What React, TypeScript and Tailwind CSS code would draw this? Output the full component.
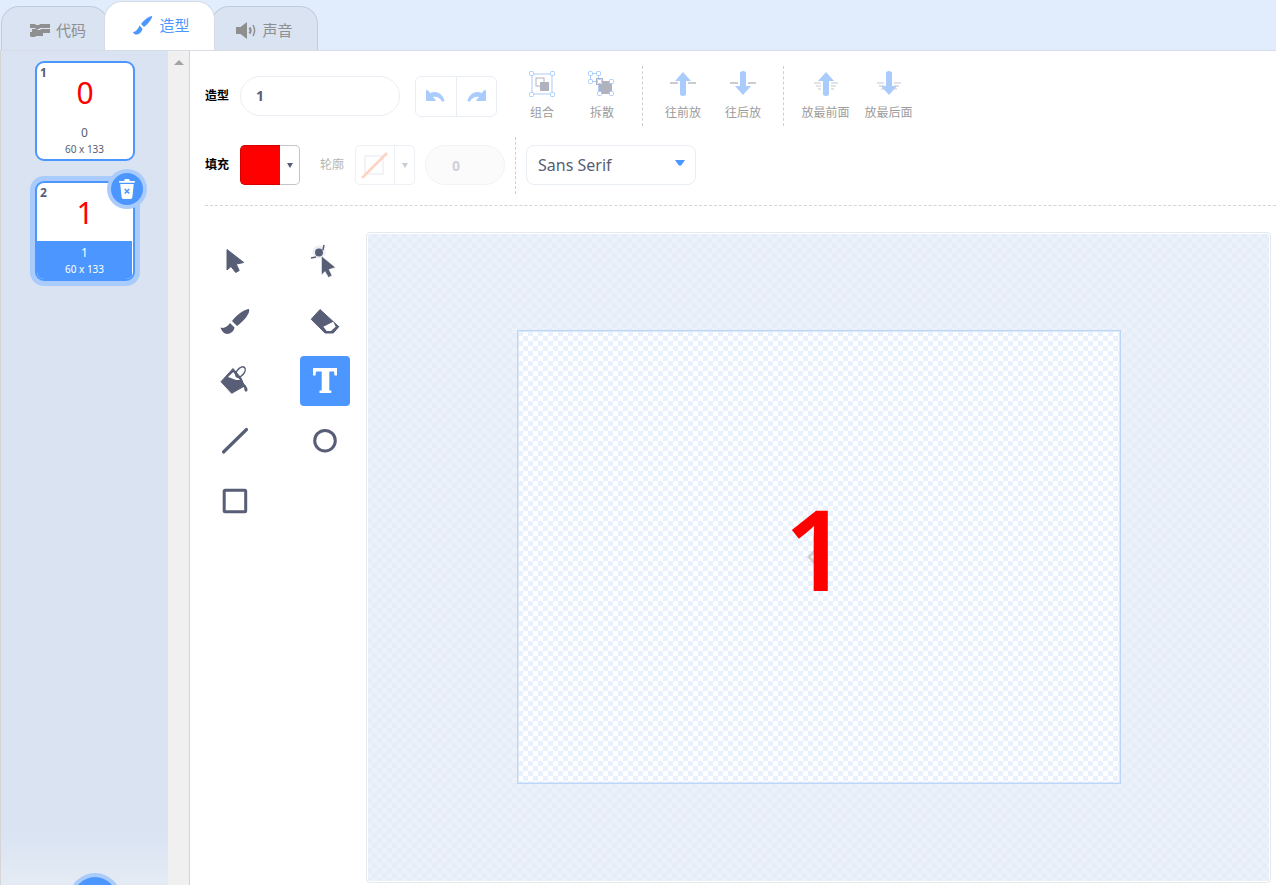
import type { ReactNode } from "react";

const fontStack = "font-['Noto_Sans','Noto_Sans_CJK_SC',sans-serif]";
const checker = "bg-[conic-gradient(#ffffff_25%,#e9f2fc_0_50%,#ffffff_0_75%,#e9f2fc_0)] bg-[length:10px_10px]";
const stageChecker = "bg-[conic-gradient(#e5edf8_25%,#ecf1fa_0_50%,#e5edf8_0_75%,#ecf1fa_0)] bg-[length:10px_10px]";

function Tab({ label, active, icon, className = "" }: { label: string; active?: boolean; icon: ReactNode; className?: string }) {
    if (active) {
        return (
            <div className="relative z-10 -mx-[4px] flex h-[49px] w-[111px] items-center justify-center gap-[6px] rounded-t-[18px] border border-b-0 border-[#d5dbe6] bg-white pb-[1px] pl-[4px] text-[15px] text-[#4c97ff]">
                {icon}
                <span>{label}</span>
            </div>
        );
    }
    return (
        <div className={`flex h-[44px] w-[107px] items-center justify-center gap-[6px] rounded-t-[18px] border border-b-0 border-[#c3cbd9] bg-[#d9e3f2] pt-[3px] text-[15px] text-[#8f8f8f] ${className}`}>
            {icon}
            <span>{label}</span>
        </div>
    );
}

function CodeIcon() {
    return (
        <svg width="20" height="14" viewBox="0 0 20 14" fill="#8f8f8f">
            <path d="M0 1h5l1 1h3l1-1h10v4H10l-1 1H6L5 5H0z" />
            <path d="M2 6h5l1 1h2l1-1h9v-0 4h-7v3H6l-1 1H1l-1-1V9h2z" />
        </svg>
    );
}

function BrushIcon({ color = "#4c97ff" }: { color?: string }) {
    return (
        <svg width="20" height="20" viewBox="0 0 20 20" fill={color}>
            <path d="M19 0c.6 2-3 7-8 11L8 8c3-4 8-8 11-8z" />
            <path d="M6.500 9.500l3 3C9 16 6 19 2.500 18.500 1 18 .3 17 0 16c3 0 5-3 6.500-6.500z" />
        </svg>
    );
}

function SoundIcon() {
    return (
        <svg width="20" height="17" viewBox="0 0 20 17" fill="none">
            <path d="M0 5h4.500L11 0v17l-6.500-5H0z" fill="#8f8f8f" />
            <path d="M13.500 5.500c1.300 1.800 1.300 4.200 0 6" stroke="#8f8f8f" strokeWidth="2.200" />
            <path d="M17 3c2 3.500 2 7.500 0 11" stroke="#8f8f8f" strokeWidth="1.500" />
        </svg>
    );
}

function TrashIcon() {
    return (
        <svg width="18" height="20" viewBox="0 0 20 22" fill="#ffffff">
            <path d="M7 1.500C7 .7 7.700 0 8.500 0h3c.8 0 1.500.7 1.500 1.500V2h5c.6 0 1 .4 1 1s-.4 1-1 1H2c-.6 0-1-.4-1-1s.4-1 1-1h5z" />
            <path d="M2.500 5.500h15L16 20c0 1-1 2-2 2H6c-1 0-2-1-2-2z" />
            <path d="M7.500 11l5 5M12.500 11l-5 5" stroke="#4c97ff" strokeWidth="1.800" />
        </svg>
    );
}

function CostumeCard({ index, value, selected }: { index: string; value: string; selected?: boolean }) {
    return (
        <div className={`relative mx-auto h-[100px] w-[100px] rounded-[9px] border-2 border-[#4c97ff] bg-white ${selected ? "shadow-[0_0_0_5px_#a9ccfc]" : ""}`}>
            <div className="flex h-full flex-col overflow-hidden rounded-[7px]">
                <div className="relative h-[58px]">
                    <span className="absolute left-[3px] top-[2px] text-[12px] font-bold leading-[16px] text-[#575e75]">{index}</span>
                    <div className="pt-[8px] text-center text-[30px] leading-[44px] text-[#ff0000]">{value}</div>
                </div>
                <div className={`mr-[1px] flex flex-1 flex-col items-center justify-end pb-[3px] ${selected ? "bg-[#4c97ff] text-white" : "text-[#575e75]"}`}>
                    <span className="text-[12px] leading-[16px]">{value}</span>
                    <span className="mt-[1px] text-[10px] leading-[14px]">60 x 133</span>
                </div>
            </div>
            {selected && (
                <div className="absolute -right-[10px] -top-[10px] flex h-[32px] w-[32px] items-center justify-center rounded-full bg-[#4c97ff] pb-[1px] shadow-[0_0_0_4px_#a9ccfc]">
                    <TrashIcon />
                </div>
            )}
        </div>
    );
}

function Divider() {
    return <div className="h-[60px] border-l border-dashed border-[#cfcfcf]" />;
}

function GroupIcon({ split }: { split?: boolean }) {
    const handle = "#a9ccfc";
    if (split) {
        return (
            <svg width="28" height="26" viewBox="0 0 28 26" fill="none">
                <rect x="2.500" y="2.500" width="8" height="8" stroke={handle} />
                <rect x="10.500" y="10.500" width="13" height="11" stroke={handle} />
                <rect x="11" y="10" width="13" height="13" fill="#b0b3be" />
                <rect x="8.500" y="7.500" width="6" height="6" stroke="#b0b3be" fill="#ffffff" />
                {[[0, 0], [8, 0], [0, 8], [9, 8], [21, 8], [9, 20], [21, 20]].map(([x, y]) => (
                    <rect key={`${x}-${y}`} x={x + 0.5} y={y + 0.5} width="4" height="4" rx="1" fill="#ffffff" stroke={handle} />
                ))}
            </svg>
        );
    }
    return (
        <svg width="26" height="26" viewBox="0 0 26 26" fill="none">
            <rect x="3" y="3" width="20" height="20" stroke={handle} />
            <rect x="7" y="7" width="8" height="8" fill="#ffffff" stroke="#b0b3be" />
            <rect x="11" y="11" width="9" height="9" fill="#b0b3be" />
            {[[0, 0], [21, 0], [0, 21], [21, 21]].map(([x, y]) => (
                <rect key={`${x}-${y}`} x={x + 0.5} y={y + 0.5} width="4" height="4" rx="1" fill="#ffffff" stroke={handle} />
            ))}
        </svg>
    );
}

function ArrowIcon({ down, full }: { down?: boolean; full?: boolean }) {
    return (
        <svg width="28" height="26" viewBox="0 0 28 26" fill="none">
            <g transform={down ? "rotate(180 14 12) translate(0 -1)" : undefined}>
                <path d="M14 1l8 9h-5v13c0 1-1 2-3 2s-3-1-3-2V10H6z" fill="#a9ccfc" />
            </g>
            {full ? (
                <path d="M2 12h7M19 12h7M4 15h5M19 15h5M6 18h3M19 18h3" stroke="#c5c7cf" strokeWidth="1.200" />
            ) : (
                <path d="M1 12h8M19 12h8" stroke="#b9bcc6" strokeWidth="1.500" />
            )}
        </svg>
    );
}

function ActionButton({ label, icon, width }: { label: string; icon: ReactNode; width: string }) {
    return (
        <div className={`flex flex-col items-center ${width}`}>
            <div className="flex h-[26px] items-center justify-center">{icon}</div>
            <span className="mt-[7px] text-[12px] leading-[18px] text-[#9c9c9c]">{label}</span>
        </div>
    );
}

function UndoIcon({ flip }: { flip?: boolean }) {
    return (
        <svg width="19" height="12" viewBox="0 0 19 12" fill="#a9ccfc" className={flip ? "-scale-x-100" : ""}>
            <path d="M0 1v9c0 .6.400 1 1 1h8c.8 0 1-.8.500-1.300L7 7.200C10 6 13.500 7 16 11.500h2.500C18 5 11-.5 4.500 3L1.700.400C1 -.2 0 .2 0 1z" />
        </svg>
    );
}

function Toolbar() {
    return (
        <div className="pl-[15px]">
            <div className="flex h-[40px] items-center">
                <span className="w-[35px] text-[12px] font-bold text-black">造型</span>
                <div className="flex h-[40px] w-[160px] items-center rounded-full border border-[#e9eef5] pb-[2px] pl-[15px] text-[14px] font-bold text-[#575e75]">1</div>
                <div className="ml-[15px] flex h-[41px] w-[82px] rounded-[6px] border border-[#e9eef5]">
                    <div className="flex flex-1 items-center justify-center border-r border-[#e9eef5]"><UndoIcon /></div>
                    <div className="flex flex-1 items-center justify-center"><UndoIcon flip /></div>
                </div>
                <div className="ml-[15px] flex items-center">
                    <ActionButton width="w-[60px]" label="组合" icon={<GroupIcon />} />
                    <ActionButton width="w-[60px]" label="拆散" icon={<GroupIcon split />} />
                </div>
                <div className="ml-[10px]"><Divider /></div>
                <div className="ml-[10px] flex items-center">
                    <ActionButton width="w-[60px]" label="往前放" icon={<ArrowIcon />} />
                    <ActionButton width="w-[60px]" label="往后放" icon={<ArrowIcon down />} />
                </div>
                <div className="ml-[10px]"><Divider /></div>
                <div className="ml-[10px] flex items-center">
                    <ActionButton width="w-[63px]" label="放最前面" icon={<ArrowIcon full />} />
                    <ActionButton width="w-[63px]" label="放最后面" icon={<ArrowIcon full down />} />
                </div>
            </div>

            <div className="mt-[29px] flex h-[40px] items-center">
                <span className="w-[35px] text-[12px] font-bold text-black">填充</span>
                <div className="flex h-[40px] w-[60px]">
                    <div className="w-[40px] rounded-l-[5px] border border-r-0 border-[#d60000] bg-[#ff0000]" />
                    <div className="flex flex-1 items-center justify-center rounded-r-[5px] border border-l-0 border-[#c4c4c4]">
                        <span className="h-0 w-0 border-x-[3.500px] border-t-[5px] border-x-transparent border-t-[#575e75]" />
                    </div>
                </div>
                <span className="ml-[20px] w-[35px] text-[12px] text-[#b5b5b5]">轮廓</span>
                <div className="flex h-[40px] w-[60px] rounded-[5px] border border-[#eceff4]">
                    <div className="flex w-[39px] items-center justify-center border-r border-[#eceff4]">
                        <svg width="30" height="30" viewBox="0 0 30 30" fill="none">
                            <rect x="5" y="6" width="18" height="18" stroke="#e6e8ee" />
                            <path d="M2 28L27 3" stroke="#ffd3c2" strokeWidth="2.500" />
                        </svg>
                    </div>
                    <div className="flex flex-1 items-center justify-center">
                        <span className="h-0 w-0 border-x-[3.500px] border-t-[5px] border-x-transparent border-t-[#c9ccd5]" />
                    </div>
                </div>
                <div className="ml-[10px] flex h-[40px] w-[80px] items-center rounded-full border border-[#f2f3f6] bg-[#fbfbfc] pl-[26px] text-[14px] font-bold text-[#cfd1da]">0</div>
                <div className="ml-[10px] h-[57px] border-l border-dashed border-[#cfcfcf]" />
                <div className="relative ml-[10px] flex h-[40px] w-[170px] items-center rounded-[8px] border border-[#e9eef5] pl-[11px] text-[16px] text-[#575e75]">
                    Sans Serif
                    <svg className="absolute right-[10px] top-[14px]" width="10" height="6" viewBox="0 0 10 6">
                        <path d="M0 0h10L6.500 5c-.8 1-2.200 1-3 0z" fill="#4c97ff" />
                    </svg>
                </div>
            </div>
            <div className="mt-[20px] border-t border-dashed border-[#d5d5d5]" />
        </div>
    );
}

const toolColor = "#575e75";

const tools: { name: string; icon: ReactNode; active?: boolean }[] = [
    {
        name: "select",
        icon: <path d="M17 13.500v20.500l4-3.500 4.700 6 3.500-2-3-6.400 7.500-1.600z" fill={toolColor} stroke={toolColor} strokeLinejoin="round" />,
    },
    {
        name: "reshape",
        icon: (
            <>
                <circle cx="19" cy="16" r="6.500" fill="#eceef2" />
                <path d="M11 22l5-1M24 9l-1 5" stroke={toolColor} strokeWidth="1.500" />
                <circle cx="19" cy="16.500" r="4" fill={toolColor} />
                <path d="M21.500 20v19l3.500-3.500 3.500 6 3.500-2-3-6 6.500-2z" fill={toolColor} stroke="#ffffff" strokeWidth="0.500" strokeLinejoin="round" />
            </>
        ),
    },
    {
        name: "brush",
        icon: (
            <g fill={toolColor}>
                <path d="M39 13C40.500 17 34 25 27 30l-5-5c5-7 13-12 17-12z" />
                <path d="M20 27l4.500 4.500C24 36 19 39 15 37.500c-2-1-4-3.500-4.500-6 3.500 1.500 7-1 9.500-4.500z" />
            </g>
        ),
    },
    {
        name: "eraser",
        icon: (
            <>
                <path d="M20 13.500L11.200 23.300 25 37h8.300l5.500-6.300z" fill={toolColor} stroke={toolColor} strokeWidth="1" strokeLinejoin="round" />
                <path d="M23.300 30.700L33.300 25.700 35.700 30.700 31 35H26.700z" fill="#ffffff" />
            </>
        ),
    },
    {
        name: "fill",
        icon: (
            <>
                <path d="M23 12.500L11 25.700 21.700 37.300 34.500 30 31 22z" fill={toolColor} stroke={toolColor} strokeLinejoin="round" />
                <path d="M18 21l5.300-5 7.200 8H26z" fill="#ffffff" />
                <ellipse cx="30.500" cy="16" rx="3.500" ry="6" transform="rotate(40 30.500 16)" fill="none" stroke={toolColor} strokeWidth="1.500" />
                <path d="M24 16l7 8" stroke={toolColor} strokeWidth="1.200" />
                <path d="M34 28c2 1 3.500 4 3.500 6 0 2-3 2-3 0 0-2-1-3-2-5z" fill={toolColor} />
            </>
        ),
    },
    {
        name: "text",
        active: true,
        icon: <path d="M13 12h24v7.500h-2.500l-.5-4h-4.700v19h2v2.500H19.500v-2.500h2.200v-19H16l-.5 4H13z" fill="#ffffff" />,
    },
    {
        name: "line",
        icon: <path d="M13.500 36L36.500 13.500" stroke={toolColor} strokeWidth="3.200" strokeLinecap="round" />,
    },
    {
        name: "oval",
        icon: <circle cx="25" cy="24.700" r="10.300" fill="none" stroke={toolColor} strokeWidth="3" />,
    },
    {
        name: "rect",
        icon: <rect x="14.200" y="14.200" width="21.500" height="21.500" rx="1" fill="none" stroke={toolColor} strokeWidth="3" />,
    },
];

function ToolGrid() {
    return (
        <div className="ml-[5px] grid w-[140px] grid-cols-[50px_50px] content-start gap-x-[40px] gap-y-[10px] pt-[4px]">
            {tools.map((tool) => (
                <div key={tool.name} className={`h-[50px] w-[50px] rounded-[4px] ${tool.active ? "bg-[#4c97ff]" : ""}`}>
                    <svg width="50" height="50" viewBox="0 0 50 50">{tool.icon}</svg>
                </div>
            ))}
        </div>
    );
}

function Canvas() {
    return (
        <div className={`ml-[16px] mr-[5px] mb-[2px] flex h-[651px] flex-1 items-center justify-center rounded-[4px] border border-[#e4e9f0] shadow-[inset_0_0_0_1px_#ffffff] ${stageChecker}`}>
            <div className={`relative mb-[1px] flex h-[454px] w-[604px] items-center justify-center border border-[#bdd6f8] shadow-[inset_0_0_0_1px_#dbe8fa] ${checker}`}>
                <svg className="absolute left-[288px] top-[214px]" width="24" height="24" viewBox="0 0 24 24">
                    <path d="M12 3l-9 9 9 9M12 8v8M12 12h10" fill="none" stroke="#c8c8c8" strokeWidth="3" opacity="0.8" />
                </svg>
                <span className="relative mb-[19px] mr-[5px] text-[112px] font-semibold leading-none text-[#ff0000]">1</span>
            </div>
        </div>
    );
}

export default function App() {
    return (
        <div className={`flex h-[885px] w-[1276px] flex-col overflow-hidden bg-white ${fontStack}`}>
            <div className="flex h-[51px] items-end border-b border-[#d7dce5] bg-[#e1edfd] pl-[1px]">
                <Tab label="代码" className="pl-[7px]" icon={<CodeIcon />} />
                <Tab label="造型" active icon={<BrushIcon />} />
                <Tab label="声音" icon={<SoundIcon />} />
            </div>
            <div className="flex min-h-0 flex-1">
                <div className="relative w-[168px] shrink-0 overflow-hidden border-l border-[#d5d5d5] bg-[linear-gradient(#d9e3f2_0,#d9e3f2_780px,#e4ebf4_834px)] pt-[10px]">
                    <div className="flex flex-col gap-[20px] pl-[1px]">
                        <CostumeCard index="1" value="0" />
                        <CostumeCard index="2" value="1" selected />
                    </div>
                    <div className="absolute left-[72px] top-[826px] h-[44px] w-[44px] rounded-full bg-[#4c97ff] shadow-[0_0_0_4px_#a9ccfc]" />
                </div>
                <div className="flex w-[22px] shrink-0 justify-center border-r border-[#d5d5d5] bg-[#f0f0f0] pt-[9px]">
                    <span className="h-0 w-0 border-x-[5px] border-b-[5px] border-x-transparent border-b-[#a3a3a3]" />
                </div>
                <div className="flex min-w-0 flex-1 flex-col pt-[25px]">
                    <Toolbar />
                    <div className="flex flex-1 pt-[26px] pl-[15px]">
                        <ToolGrid />
                        <Canvas />
                    </div>
                </div>
            </div>
        </div>
    );
}
